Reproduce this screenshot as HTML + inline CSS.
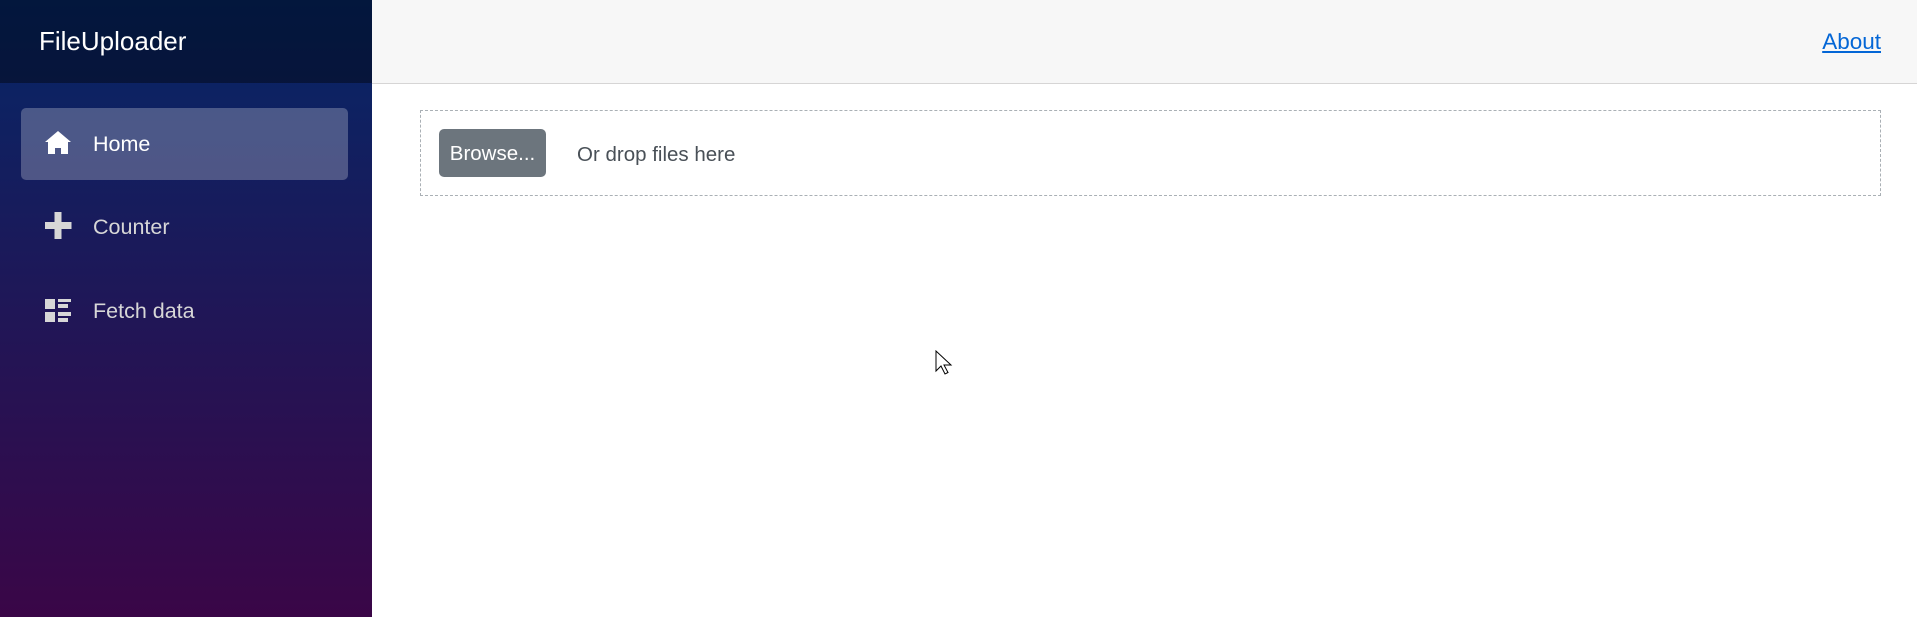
<!DOCTYPE html>
<html><head><meta charset="utf-8"><style>
*{margin:0;padding:0;box-sizing:border-box}
body{width:1917px;height:617px;overflow:hidden;font-family:"Liberation Sans",Arial,sans-serif;background:#fff;position:relative}
.side{position:absolute;left:0;top:0;width:372px;height:617px;background:linear-gradient(180deg,rgb(5,39,103) 0%,#3a0647 100%)}
.brand{position:absolute;left:0;top:0;width:372px;height:83px;background:rgba(0,0,0,0.4);color:#fff;font-size:26px;padding-left:39px;line-height:82px}
.item{position:absolute;left:21px;width:327px;height:72px;border-radius:5px;color:#d7d7d7;font-size:21.5px;line-height:72px;padding-left:72px}
.item.active{background:rgba(255,255,255,0.25);color:#fff}
.item svg{position:absolute;left:24px;top:23px}
.top{position:absolute;left:372px;top:0;right:0;height:84px;background:#f7f7f7;border-bottom:1px solid #d6d5d5}
.about{position:absolute;right:36px;top:29px;color:#0366d6;font-size:22.5px;text-decoration:underline}
.drop{position:absolute;left:420px;top:110px;width:1461px;height:86px;border:1px dashed #aab0b5}
.btn{position:absolute;left:18px;top:18px;width:107px;height:48px;background:#6c757d;border-radius:5px;color:#fff;line-height:50px;text-align:center;font-family:"Liberation Sans",sans-serif;font-size:20.5px}
.txt{position:absolute;left:156px;top:20px;line-height:48px;color:#495057;font-family:"Liberation Sans",sans-serif;font-size:20.5px}
</style></head><body>
<div class="side">
<div class="brand">FileUploader</div>
<div class="item active" style="top:108px"><svg width="27" height="24" viewBox="0 0 27 24"><path d="M13 0L0 11h3v12h7v-6h6v6h7V11h3z" fill="#fff"/></svg>Home</div>
<div class="item" style="top:191px"><svg width="27" height="27" viewBox="0 0 27 27" style="top:21px"><path d="M9.5 0h7v10h10v7H16.5v10h-7V17H0v-7h9.5z" fill="#d7d7d7"/></svg>Counter</div>
<div class="item" style="top:275px"><svg width="27" height="24" viewBox="0 0 27 24" style="top:24px"><g fill="#d7d7d7"><rect x="0" y="0" width="10" height="10"/><rect x="0" y="13" width="10" height="10"/><rect x="13" y="0" width="13" height="3"/><rect x="13" y="5" width="10" height="4"/><rect x="13" y="13" width="13" height="4"/><rect x="13" y="19" width="10" height="4"/></g></svg>Fetch data</div>
</div>
<div class="top"><a class="about">About</a></div>
<div class="drop"><div class="btn">Browse...</div><div class="txt">Or drop files here</div></div>
<svg style="position:absolute;left:935px;top:350px" width="20" height="28" viewBox="0 0 20 28"><path d="M1 1v20l5-5 4 8 3-1.5-4-7.5h7z" fill="#fff" stroke="#000" stroke-width="1"/></svg>
</body></html>
